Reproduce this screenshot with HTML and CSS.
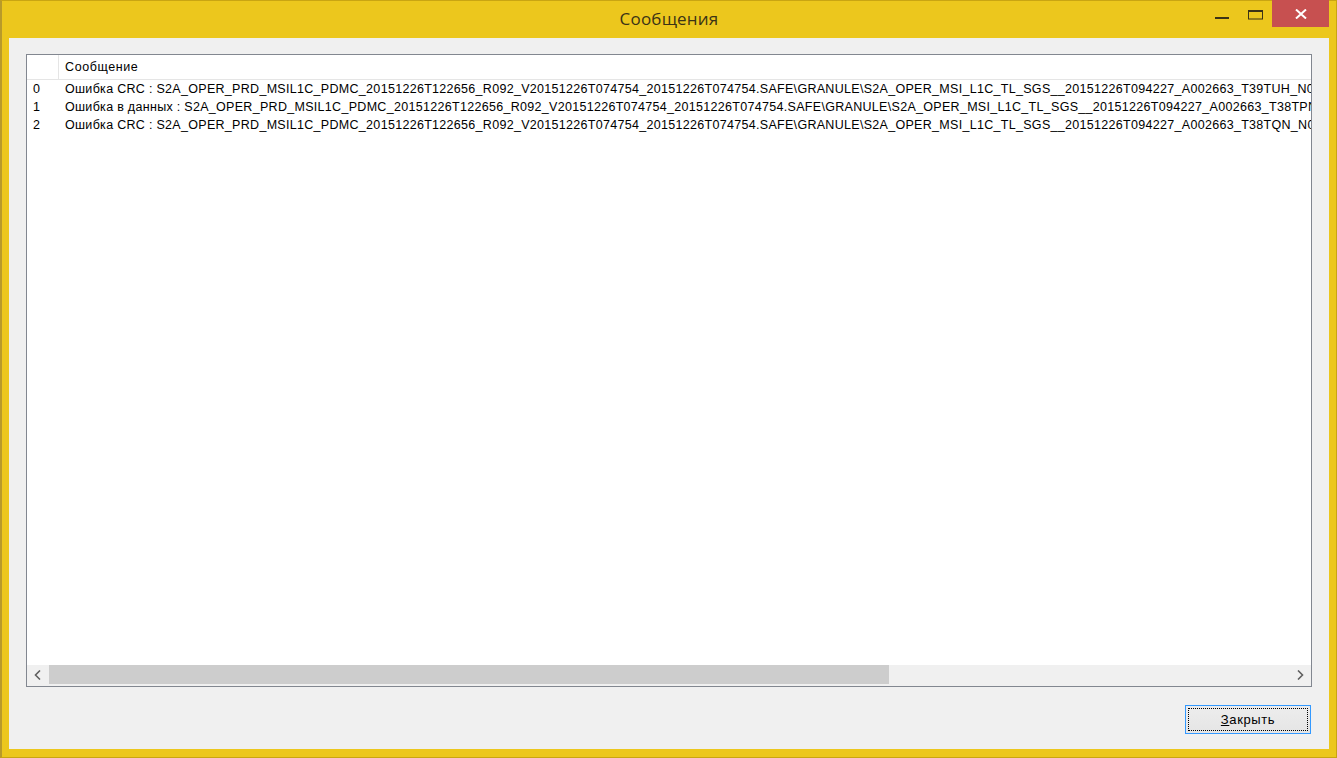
FILE: index.html
```html
<!DOCTYPE html>
<html lang="ru">
<head>
    <meta charset="UTF-8">
    <title>Сообщения</title>
    <link rel="stylesheet" href="styles.css">
</head>
<body>
    <div class="window">
        <div class="titlebar">
            <div></div>
            <div class="title">Сообщения</div>
            <div class="controls">
                <div class="ctl ctl-min">
                    <svg width="15" height="10" viewBox="0 0 15 10"><rect x="0" y="7" width="14" height="2" fill="#3b3316"/></svg>
                </div>
                <div class="ctl ctl-max">
                    <svg width="16" height="10" viewBox="0 0 16 10"><rect x="0.5" y="1" width="14" height="8" fill="none" stroke="#3b3316" stroke-width="1"/><rect x="0" y="0" width="15" height="2" fill="#3b3316"/></svg>
                </div>
                <div class="ctl ctl-close">
                    <svg width="12" height="10" viewBox="0 0 12 10"><path d="M1 0.5 L11 9.5 M11 0.5 L1 9.5" stroke="#fff" stroke-width="2"/></svg>
                </div>
            </div>
        </div>

        <div class="client">
            <div class="listview">
                <div class="lv-header">
                    <div class="col-idx"></div>
                    <div class="col-msg">Сообщение</div>
                </div>
                <div class="lv-body">
                    <div class="lv-row">
                        <div class="col-idx">0</div>
                        <div class="col-msg">Ошибка CRC : S2A_OPER_PRD_MSIL1C_PDMC_20151226T122656_R092_V20151226T074754_20151226T074754.SAFE\GRANULE\S2A_OPER_MSI_L1C_TL_SGS__20151226T094227_A002663_T39TUH_N02.01</div>
                    </div>
                    <div class="lv-row">
                        <div class="col-idx">1</div>
                        <div class="col-msg">Ошибка в данных : S2A_OPER_PRD_MSIL1C_PDMC_20151226T122656_R092_V20151226T074754_20151226T074754.SAFE\GRANULE\S2A_OPER_MSI_L1C_TL_SGS__20151226T094227_A002663_T38TPN_N02.01</div>
                    </div>
                    <div class="lv-row">
                        <div class="col-idx">2</div>
                        <div class="col-msg">Ошибка CRC : S2A_OPER_PRD_MSIL1C_PDMC_20151226T122656_R092_V20151226T074754_20151226T074754.SAFE\GRANULE\S2A_OPER_MSI_L1C_TL_SGS__20151226T094227_A002663_T38TQN_N02.01</div>
                    </div>
                </div>
                <div class="hscroll">
                    <div class="arrow">
                        <svg width="8" height="10" viewBox="0 0 8 10"><path d="M6 0.5 L1.5 5 L6 9.5" fill="none" stroke="#606060" stroke-width="1.6"/></svg>
                    </div>
                    <div class="track">
                        <div class="thumb"></div>
                    </div>
                    <div class="arrow">
                        <svg width="8" height="10" viewBox="0 0 8 10"><path d="M2 0.5 L6.5 5 L2 9.5" fill="none" stroke="#606060" stroke-width="1.6"/></svg>
                    </div>
                </div>
            </div>

            <div class="footer">
                <button class="btn"><span class="btn-focus"><u>З</u>акрыть</span></button>
            </div>
        </div>
    </div>
</body>
</html>
```

FILE: styles.css
```css
* {
    box-sizing: border-box;
}

body {
    margin: 0;
    width: 1337px;
    height: 758px;
    overflow: hidden;
    background: #8a8a8a;
    font-family: "Liberation Sans", Arial, sans-serif;
}

.window {
    width: 1337px;
    height: 758px;
    background: #ecc71d;
    border: 1px solid #c9a512;
    border-left: 2px solid #b89a2a;
    display: flex;
    flex-direction: column;
    padding: 0 7px 8px 7px;
}

/* Title bar */
.titlebar {
    height: 37px;
    display: grid;
    grid-template-columns: 1fr auto 1fr;
    align-items: start;
}

.title {
    font-family: "Open Sans", "Noto Sans", sans-serif;
    font-size: 17px;
    color: #3b3316;
    padding-top: 6px;
    letter-spacing: 0.2px;
}

.controls {
    display: flex;
    justify-content: flex-end;
    align-items: flex-start;
}

.ctl {
    height: 26px;
    display: flex;
    align-items: center;
    justify-content: center;
}

.ctl-min {
    width: 33px;
    padding-top: 2px;
}

.ctl-max {
    width: 33px;
    padding-top: 2px;
}

.ctl-close {
    width: 57px;
    background: #c75050;
    margin-top: -1px;
    height: 27px;
}

/* Client area */
.client {
    flex: 1;
    background: #f0f0f0;
    padding: 16px 17px 0 17px;
    display: flex;
    flex-direction: column;
}

.listview {
    height: 633px;
    background: #fff;
    border: 1px solid #828790;
    display: flex;
    flex-direction: column;
    overflow: hidden;
    font-size: 12.5px;
    letter-spacing: 0.3px;
    color: #000;
}

.lv-header {
    display: flex;
    height: 25px;
    border-bottom: 1px solid #e5e5e5;
    align-items: center;
}

.lv-header .col-idx {
    height: 100%;
    border-right: 1px solid #e5e5e5;
}

.lv-header .col-msg {
    letter-spacing: 0.6px;
}

.col-idx {
    width: 32px;
    flex: none;
    padding-left: 6px;
}

.col-msg {
    padding-left: 6px;
    white-space: nowrap;
}

.lv-body {
    flex: 1;
}

.lv-row {
    display: flex;
    height: 18px;
    align-items: center;
}

.hscroll {
    height: 21px;
    display: flex;
    background: #f0f0f0;
    padding-bottom: 2px;
}

.arrow {
    width: 22px;
    display: flex;
    align-items: center;
    justify-content: center;
}

.track {
    flex: 1;
}

.thumb {
    width: 840px;
    height: 100%;
    background: #cdcdcd;
}

/* Footer */
.footer {
    display: flex;
    justify-content: flex-end;
    padding-top: 18px;
    padding-right: 1px;
}

.btn {
    width: 126px;
    height: 29px;
    border: 1px solid #3399ff;
    background: linear-gradient(#ededed, #e5e5e5);
    padding: 2px;
    font-family: "Liberation Sans", Arial, sans-serif;
    font-size: 13px;
    letter-spacing: 0.6px;
    color: #000;
}

.btn-focus {
    display: flex;
    height: 100%;
    align-items: center;
    justify-content: center;
    border: 1px dotted #000;
}
```
